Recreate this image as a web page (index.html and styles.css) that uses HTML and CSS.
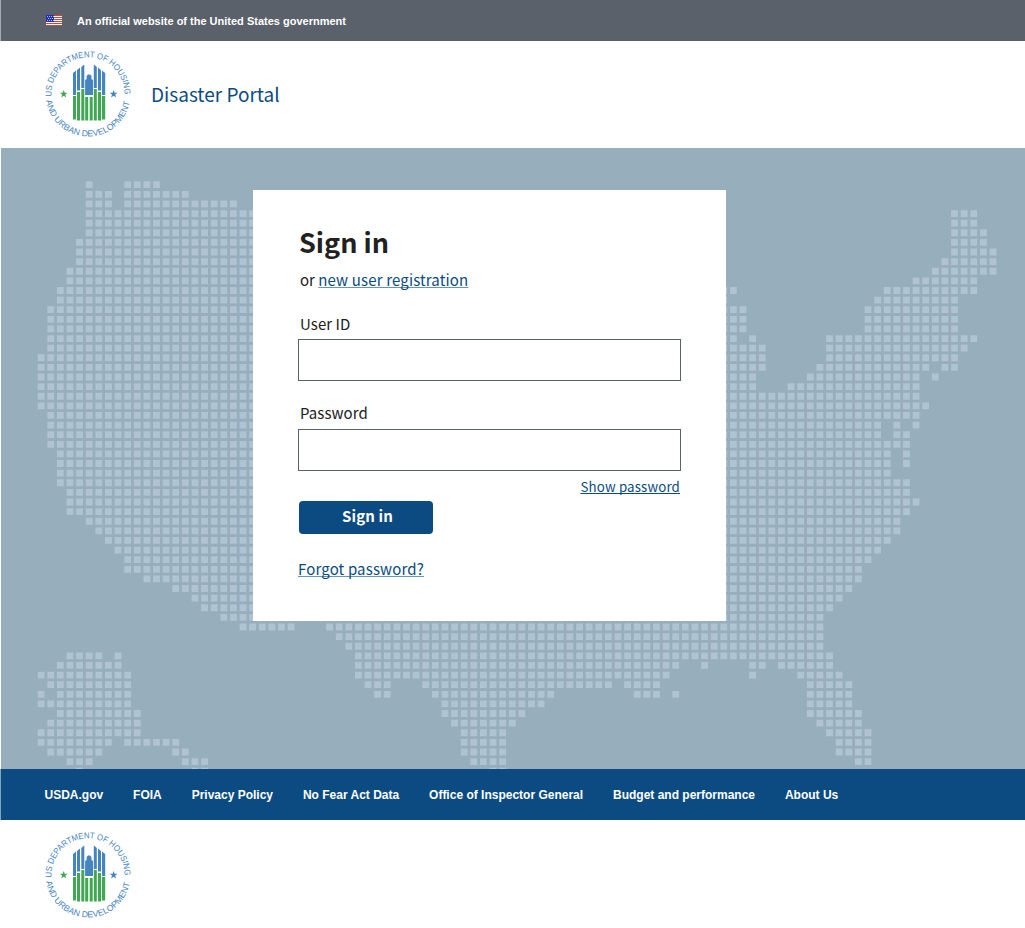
FILE: index.html
```html
<!DOCTYPE html>
<html lang="en">
<head>
<meta charset="utf-8">
<title>Disaster Portal</title>
<link rel="stylesheet" href="styles.css">
</head>
<body>
<svg class="defs" width="0" height="0" aria-hidden="true">
  <defs>
    <path id="arc-top" d="M7.600 46.500A36.500 36.500 0 1 1 80.400 46.500"/>
    <path id="arc-bottom" d="M2 50.500A42.500 42.500 0 0 0 86 50.500"/>
    <symbol id="seal" viewBox="0 0 88 88">
      <g class="seal-text">
        <text><textPath href="#arc-top" textLength="118" lengthAdjust="spacingAndGlyphs">US DEPARTMENT OF HOUSING</textPath></text>
        <text><textPath href="#arc-bottom" textLength="119" lengthAdjust="spacingAndGlyphs">AND URBAN DEVELOPMENT</textPath></text>
      </g>
      <g transform="translate(0 -3)">
        <path fill="#4484bf" d="M29 26l3-2.400v24.400h-3zM33 23l3-2.400v23h-3zM37.300 20l3-2.500v23.500h-3zM49.800 17.500l3 2.500v21h-3zM54 20.600l3 2.400v20.600h-3zM58 23.600l3.200 2.400v22h-3.200zM41.100 33l1.500-1v-3l1.400-1.500h2l1.500 1.500v3l1.500 1v15h-7.900z"/>
        <path fill="#40a853" d="M29 49h3v23.500h-3zM33 45h3v28.500h-3zM37.300 42h3v31.500h-3zM41.200 50h3v23.500h-3zM45.700 50h3v23.500h-3zM49.800 42h3v31.500h-3zM54 45h3v28.500h-3zM58 49h3.200v23.500h-3.200z"/>
        <path fill="#40a853" d="M19.700 43l1 2.700 3 .1-2.400 1.800.9 2.900-2.500-1.700-2.500 1.700.9-2.900-2.400-1.800 3-.1z"/>
        <path fill="#4484bf" d="M69.600 43l1 2.700 3 .1-2.400 1.800.9 2.900-2.500-1.700-2.500 1.700.9-2.900-2.400-1.800 3-.1z"/>
      </g>
    </symbol>
  </defs>
</svg>

<div class="gov-bar">
  <svg class="flag" width="16" height="11" viewBox="0 0 16 11">
    <path fill="#fff" d="M0 0h16v11H0z"/>
    <path stroke="#dc4030" d="M0 .5h16M0 2.500h16M0 4.500h16M0 6.500h16M0 8.500h16M0 10.500h16"/>
    <path fill="#2033b5" d="M0 0h8v7H0z"/>
    <path stroke="#fff" stroke-width=".8" stroke-dasharray=".8 1.200" d="M1 1.500h7M2 3.500h6M1 5.500h7"/>
  </svg>
  <span class="gov-text">An official website of the United States government</span>
</div>

<header class="header">
  <svg class="seal" width="88" height="88"><use href="#seal"/></svg>
  <span class="brand">Disaster Portal</span>
</header>

<main class="hero">
  <svg class="map" width="1024" height="621" aria-hidden="true">
    <!-- One unit is one map cell; each run of cells is a dashed line. -->
    <path transform="translate(36.700 36.700) scale(9.615)" d="M5 0h1M9 0h4
M5 1h3M9 1h7
M5 2h3M9 2h12
M5 3h18M95 3h3
M5 4h18M95 4h3
M5 5h18M95 5h4
M4 6h19M95 6h4
M4 7h19M95 7h5
M4 8h19M94 8h6
M3 9h20M93 9h7
M3 10h20M91 10h7
M2 11h21M71 11h2M88 11h10
M2 12h21M71 12h1M87 12h9
M1 13h22M71 13h3M86 13h10
M1 14h22M71 14h3M86 14h10
M1 15h22M71 15h3M86 15h10
M1 16h22M71 16h2M74 16h1M82 16h16
M1 17h22M71 17h5M82 17h15
M0 18h23M71 18h5M82 18h14
M0 19h23M71 19h5M81 19h12M94 19h2
M0 20h23M71 20h4M80 20h12M93 20h1
M0 21h23M71 21h4M78 21h14
M0 22h23M71 22h21
M0 23h23M71 23h22
M1 24h22M71 24h21
M1 25h22M71 25h17M89 25h1M91 25h1
M1 26h22M71 26h17M89 26h2
M1 27h22M71 27h20
M2 28h21M71 28h18M90 28h1
M2 29h21M71 29h18M90 29h1
M2 30h21M71 30h18
M2 31h21M71 31h20
M3 32h20M71 32h20
M3 33h20M71 33h21
M3 34h20M71 34h20
M5 35h18M71 35h19
M6 36h17M71 36h19
M7 37h16M71 37h18
M8 38h15M71 38h17
M9 39h14M71 39h16
M9 40h14M71 40h15
M11 41h12M71 41h15
M14 42h9M71 42h14
M16 43h7M71 43h13
M17 44h6M71 44h12
M19 45h4M71 45h11
M21 46h6M30 46h52
M31 47h51
M32 48h50
M3 49h4M8 49h1M33 49h50
M2 50h7M33 50h34M69 50h1M74 50h2M77 50h6
M0 51h10M33 51h33M74 51h1M79 51h5
M1 52h9M34 52h3M40 52h20M61 52h4M80 52h5
M0 53h1M2 53h8M35 53h2M41 53h13M62 53h3M66 53h1M80 53h5
M0 54h10M42 54h11M80 54h5
M2 55h9M42 55h9M80 55h6
M1 56h10M43 56h7M81 56h5
M0 57h11M44 57h5M82 57h5
M0 58h8M9 58h6M44 58h5M83 58h4
M1 59h6M14 59h2M44 59h5M83 59h4
M3 60h3M15 60h3M45 60h4M85 60h2
M4 61h1M16 61h2M47 61h2"/>
  </svg>
  <form class="card">
    <h1 class="title">Sign in</h1>
    <p class="register">or <a class="link" href="#">new user registration</a></p>
    <label class="label" for="user">User ID</label>
    <input class="input" id="user" type="text">
    <label class="label label-password" for="password">Password</label>
    <input class="input" id="password" type="password">
    <a class="link show" href="#">Show password</a>
    <button class="submit" type="button">Sign in</button>
    <a class="link forgot" href="#">Forgot password?</a>
  </form>
</main>

<nav class="nav">
  <a href="#">USDA.gov</a>
  <a href="#">FOIA</a>
  <a href="#">Privacy Policy</a>
  <a href="#">No Fear Act Data</a>
  <a href="#">Office of Inspector General</a>
  <a href="#">Budget and performance</a>
  <a href="#">About Us</a>
</nav>

<footer class="footer">
  <svg class="seal" width="88" height="88"><use href="#seal"/></svg>
</footer>
</body>
</html>
```
FILE: styles.css
```css
* { box-sizing: border-box; }

body {
  margin: 0;
  height: 928px;
  overflow: hidden;
  background: #fff;
  color: #212121;
  font-family: "Noto Sans CJK SC", "Open Sans", sans-serif;
}

.defs { position: absolute; }

.gov-bar {
  display: flex;
  align-items: center;
  gap: 15px;
  height: 41px;
  padding-left: 45px;
  border-left: 1px solid #a9adb3;
  background: #5b616b;
}

.gov-text {
  color: #fff;
  font: bold 11px/14px "Liberation Sans", Arial, sans-serif;
}

.header {
  display: flex;
  align-items: flex-start;
  gap: 19px;
  height: 107px;
  padding: 9px 0 0 44px;
}

.seal { display: block; }

.seal-text {
  fill: #4484bf;
  font: 8.6px "Liberation Sans", Arial, sans-serif;
}

.brand {
  margin-top: 30px;
  color: #0b4b82;
  font-size: 19px;
  line-height: 28px;
}

.hero {
  position: relative;
  height: 621px;
  margin-left: 1px;
  padding: 42px 0 0 252px;
  background: #97aebd;
}

.map {
  position: absolute;
  top: 0;
  left: 0;
}

.map path {
  fill: none;
  stroke: #afc4d0;
  stroke-width: .71;
  stroke-dasharray: .71 .29;
}

.card {
  position: relative;
  display: flex;
  flex-direction: column;
  align-items: flex-start;
  width: 473px;
  height: 431px;
  padding: 32px 45px 0;
  background: #fff;
}

.title {
  margin: 0 0 0 1px;
  font-size: 27px;
  font-weight: 700;
  line-height: 40px;
}

.register {
  margin: 6px 0 0 2px;
  font-size: 15px;
  line-height: 24px;
}

.link {
  color: #0b4b82;
  letter-spacing: .15px;
  text-decoration: underline;
  text-decoration-color: #6794ba;
  text-decoration-skip-ink: none;
  text-decoration-thickness: 1px;
  text-underline-offset: 1px;
}

.label {
  margin: 20px 0 3px 2px;
  font-size: 15px;
  letter-spacing: .06px;
  line-height: 24px;
}

.label-password { margin-bottom: 4px; }

.input {
  width: 383px;
  height: 42px;
  border: 1px solid #5b616b;
  background: #fff;
}

.show {
  align-self: flex-end;
  margin: 6px 1px 0 0;
  font-size: 13.3px;
  line-height: 20px;
  text-decoration-color: #0b4b82;
}

.submit {
  width: 134px;
  height: 33px;
  margin: 4px 0 0 1px;
  padding: 0 0 3px 3px;
  border: 0;
  border-radius: 4px;
  background: #0b4b82;
  color: #fff;
  font: bold 15px/24px "Noto Sans CJK SC", "Open Sans", sans-serif;
  letter-spacing: .15px;
}

.forgot {
  margin-top: 23px;
  font-size: 15px;
  line-height: 24px;
}

.nav {
  display: flex;
  align-items: center;
  gap: 29.9px;
  height: 51px;
  padding-left: 43.5px;
  border-left: 1px solid #84a5c0;
  background: #0b4b82;
}

.nav a {
  color: #fff;
  font: bold 12px/16px "Liberation Sans", Arial, sans-serif;
  text-decoration: none;
}

.footer { padding: 11px 0 0 44px; }
```
